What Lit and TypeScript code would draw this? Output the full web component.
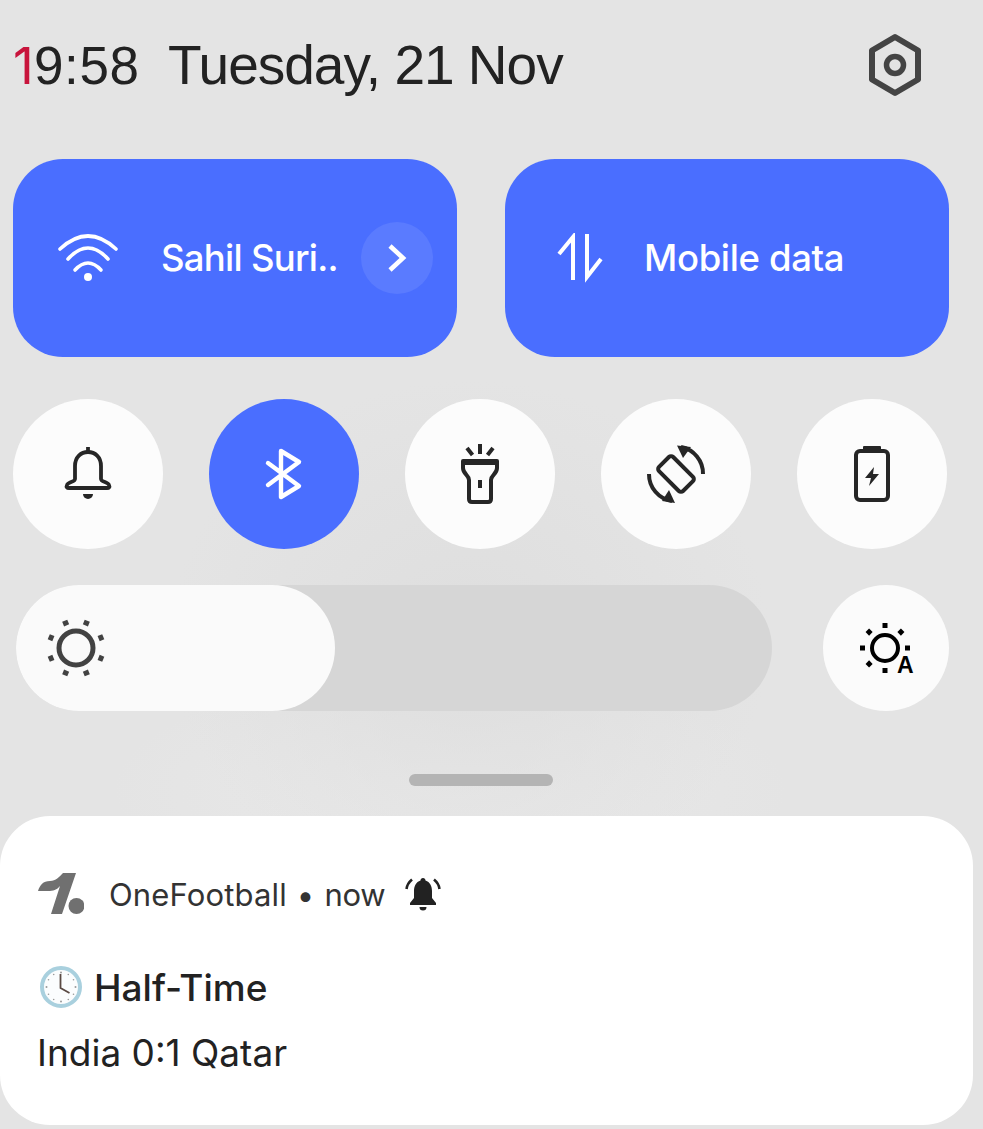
import { LitElement, html, css, svg } from "lit";
import { customElement } from "lit/decorators.js";

const rays = (cx: number, cy: number, r1: number, r2: number, start: number, w: number, skip = -1) =>
  [0, 1, 2, 3, 4, 5, 6, 7]
    .filter((i) => i !== skip)
    .map((i) => {
      const a = ((start + i * 45) * Math.PI) / 180;
      return svg`<line x1=${cx + r1 * Math.sin(a)} y1=${cy - r1 * Math.cos(a)} x2=${cx + r2 * Math.sin(a)} y2=${cy - r2 * Math.cos(a)} stroke-width=${w}></line>`;
    });

@customElement("app-root")
export class AppRoot extends LitElement {
  static styles = css`
    :host {
      display: block;
      width: 983px;
      height: 1129px;
      overflow: hidden;
      background:
        radial-gradient(ellipse 300px 260px at 470px 640px, #dedede 0%, rgba(222, 222, 222, 0) 100%),
        radial-gradient(ellipse 340px 120px at 450px 790px, #e9e9e9 0%, rgba(233, 233, 233, 0) 100%),
        #e4e4e4;
      font-family: Inter, "Liberation Sans", sans-serif;
      color: #222;
    }
    svg { display: block; flex: none; }
    .header {
      height: 130px;
      margin-bottom: 29px;
      padding: 0 59px 0 13px;
      display: flex;
      align-items: center;
      box-sizing: border-box;
      font-family: "Liberation Sans", Arial, sans-serif;
    }
    .time { font-size: 53px; letter-spacing: 0.6px; width: 155px; flex: none; display: flex; align-items: baseline; }
    .time b { font: 400 51px Inter, sans-serif; letter-spacing: 0; color: #c8143c; width: 21px; flex: none; overflow: hidden; }
    .date { font-size: 55px; letter-spacing: -1px; flex: 1; }
    .tiles {
      display: grid;
      grid-template-columns: 444px 444px;
      column-gap: 48px;
      padding-left: 13px;
    }
    .tile {
      height: 198px;
      border-radius: 50px;
      background: #4a6eff;
      color: #fff;
      display: flex;
      align-items: center;
      font-size: 36.5px;
      font-weight: 500;
    }
    .tile.wifi { padding-left: 45px; }
    .tile.wifi .label { margin-left: 43px; letter-spacing: -0.75px; }
    .tile.data { padding-left: 52px; }
    .tile.data .label { margin-left: 41px; letter-spacing: -0.36px; }
    .chev {
      margin-left: auto;
      margin-right: 24px;
      width: 72px;
      height: 72px;
      border-radius: 50%;
      background: #5a7bff;
      display: flex;
      align-items: center;
      justify-content: center;
    }
    .circles {
      display: flex;
      gap: 46px;
      padding-left: 13px;
      margin-top: 42px;
    }
    .circle {
      width: 150px;
      height: 150px;
      border-radius: 50%;
      background: #fcfcfc;
      display: flex;
      align-items: center;
      justify-content: center;
    }
    .circle.on { background: #4a6eff; }
    .bright {
      display: flex;
      align-items: center;
      gap: 51px;
      padding-left: 16px;
      margin-top: 36px;
    }
    .track {
      width: 756px;
      height: 126px;
      border-radius: 63px;
      background: #d6d6d6;
    }
    .fill {
      width: 319px;
      height: 126px;
      border-radius: 63px;
      background: #fafafa;
      display: flex;
      align-items: center;
      padding-left: 30px;
      box-sizing: border-box;
    }
    .auto {
      width: 126px;
      height: 126px;
      border-radius: 50%;
      background: #fbfbfb;
      position: relative;
      display: flex;
      align-items: center;
      justify-content: center;
    }
    .auto svg { margin: -1px 2px 0 0; }
    .auto span {
      position: absolute;
      left: 74px;
      top: 69px;
      font: 700 23px/1 "Liberation Sans", Arial, sans-serif;
      color: #000;
    }
    .handle {
      width: 144px;
      height: 12px;
      border-radius: 6px;
      background: #b4b4b4;
      margin: 63px 0 30px 409px;
    }
    .card {
      width: 973px;
      height: 309px;
      box-sizing: border-box;
      border-radius: 50px;
      background: #fff;
      padding: 55px 0 0 38px;
    }
    .app {
      display: flex;
      align-items: center;
      height: 46px;
      font-size: 31px;
      letter-spacing: 0.15px;
      color: #333;
    }
    .app .name { margin-left: 25px; }
    .app .dot { margin: 0 10px 0 10px; }
    .app .when { letter-spacing: -0.3px; }
    .app svg.ring { margin-left: 20px; }
    .title {
      display: flex;
      align-items: center;
      margin-top: 46px;
      height: 48px;
      font-size: 37px;
      font-weight: 500;
      color: #222;
    }
    .title span { margin-left: 11px; }
    .body {
      margin: 18px 0 0 -1px;
      font-size: 37px;
      line-height: 48px;
      color: #222;
    }
  `;

  render() {
    return html`
      <div class="header">
        <div class="time"><b>1</b><span>9:58</span></div>
        <div class="date">Tuesday, 21 Nov</div>
        <svg width="58" height="64" viewBox="0 0 58 64" fill="none" stroke="#444">
          <path d="M29 4 L52 17.5 V46.5 L29 60 L6 46.5 V17.5 Z" stroke-width="6" stroke-linejoin="round"></path>
          <circle cx="29" cy="32" r="8.5" stroke-width="5.5"></circle>
        </svg>
      </div>

      <div class="tiles">
        <div class="tile wifi">
          <svg width="60" height="50" viewBox="0 0 60 50" fill="none" stroke="#fff" stroke-width="3.6" stroke-linecap="round">
            <path d="M2 16 Q30 -10 58 16"></path>
            <path d="M10 26 Q30 4 50 26"></path>
            <path d="M17 37 Q30 23 43 37"></path>
            <circle cx="30" cy="44" r="4" fill="#fff" stroke="none"></circle>
          </svg>
          <div class="label">Sahil Suri..</div>
          <div class="chev">
            <svg width="22" height="30" viewBox="0 0 22 30" fill="none" stroke="#fff" stroke-width="4.6">
              <path d="M4 3 L17 15 L4 27"></path>
            </svg>
          </div>
        </div>
        <div class="tile data">
          <svg width="46" height="50" viewBox="0 0 46 50" fill="none" stroke="#fff" stroke-width="4">
            <path d="M2 21 L16 4 V47"></path>
            <path d="M30 1 V44 L44 26"></path>
          </svg>
          <div class="label">Mobile data</div>
        </div>
      </div>

      <div class="circles">
        <div class="circle">
          <svg width="50" height="56" viewBox="0 0 50 56" fill="none" stroke="#262626" stroke-width="3.8" stroke-linejoin="round">
            <path d="M12 33 V20 C12 11 18 6 25 6 C32 6 38 11 38 20 V33 C38 36 45 36 46 39 C47 41 46 42 44 42 H6 C4 42 3 41 4 39 C5 36 12 36 12 33 Z"></path>
            <path d="M25 1 V6"></path>
            <path d="M20 48 H30 A5 5 0 0 1 20 48 Z" fill="#262626" stroke="none"></path>
          </svg>
        </div>
        <div class="circle on">
          <svg width="40" height="56" viewBox="0 0 40 56" fill="none" stroke="#fff" stroke-width="4.4" stroke-linejoin="round" stroke-linecap="round">
            <path d="M4 17 L35 40 L17 51 V5 L35 16 L4 39"></path>
          </svg>
        </div>
        <div class="circle">
          <svg width="44" height="64" viewBox="0 0 44 64" fill="none" stroke="#262626" stroke-width="4">
            <path d="M5 19 H39 V26 C39 32 33 33 33 38 V57 Q33 60 30 60 H14 Q11 60 11 57 V38 C11 33 5 32 5 26 Z" stroke-linejoin="round"></path>
            <path d="M5 21 H39" stroke-width="4"></path>
            <path d="M22 2 V12 M9 6 L14.500 13 M35 6 L29.500 13" stroke-width="4"></path>
            <rect x="20" y="38" width="4" height="8" fill="#262626" stroke="none"></rect>
          </svg>
        </div>
        <div class="circle">
          <svg width="64" height="64" viewBox="0 0 64 64" fill="none" stroke="#262626" stroke-width="4">
            <rect x="15" y="22" width="34" height="20" rx="3" transform="rotate(45 32 32)"></rect>
            <path d="M37 5 A27 27 0 0 1 59 32"></path>
            <path d="M5 32 A27 27 0 0 0 28 59"></path>
            <path d="M33 3.500 L47 5 L39 16 Z" fill="#262626" stroke="none"></path>
            <path d="M31 61 L18 59 L25 48 Z" fill="#262626" stroke="none"></path>
          </svg>
        </div>
        <div class="circle">
          <svg width="38" height="58" viewBox="0 0 38 58" fill="none" stroke="#262626" stroke-width="4">
            <rect x="3" y="6" width="32" height="49" rx="4" stroke-linejoin="round"></rect>
            <path d="M10 1.500 Q10 1 11 1 H27 Q28 1 28 2 V6 H10 Z" fill="#262626" stroke="none"></path>
            <path d="M21 22 L12 33 H18 L16 41 L26 29 H20 Z" fill="#262626" stroke="none"></path>
          </svg>
        </div>
      </div>

      <div class="bright">
        <div class="track">
          <div class="fill">
            <svg width="60" height="60" viewBox="0 0 60 60" fill="none" stroke="#424242">
              <circle cx="30" cy="30" r="17" stroke-width="5"></circle>
              ${rays(30, 30, 24.5, 29.5, 22.5, 5.5)}
            </svg>
          </div>
        </div>
        <div class="auto">
          <svg width="52" height="52" viewBox="0 0 52 52" fill="none" stroke="#000">
            <circle cx="26" cy="26" r="13" stroke-width="4"></circle>
            ${rays(26, 26, 20, 25, 0, 5, 3)}
          </svg>
          <span>A</span>
        </div>
      </div>

      <div class="handle"></div>

      <div class="card">
        <div class="app">
          <svg width="46" height="42" viewBox="0 0 46 42" fill="#707070">
            <path d="M25 0 H38 L24 41 H13 L22 13 C19 17 15 18 10 18 H0 C2 12 5 8 12 8 C18 8 21 4 25 0 Z"></path>
            <circle cx="38.500" cy="33" r="8"></circle>
          </svg>
          <span class="name">OneFootball</span>
          <span class="dot">•</span>
          <span class="when">now</span>
          <svg class="ring" width="36" height="36" viewBox="0 0 36 36" fill="#222">
            <path d="M18 2 C19.500 2 20.500 3 20.500 4.500 C25 6 27 10 27 15 V22 L31 27 V29 H5 V27 L9 22 V15 C9 10 11 6 15.500 4.500 C15.500 3 16.500 2 18 2 Z"></path>
            <path d="M14.500 31 H21.500 A3.500 3.500 0 0 1 14.500 31 Z"></path>
            <path d="M1.500 13 C2 9 4 6 7 3.500 M34.500 13 C34 9 32 6 29 3.500" fill="none" stroke="#222" stroke-width="2.600"></path>
          </svg>
        </div>
        <div class="title">
          <svg width="44" height="44" viewBox="0 0 44 44" style="margin-left:1px">
            <circle cx="22" cy="22" r="19" fill="#fbfdfe" stroke="#a9d0de" stroke-width="4"></circle>
            <g fill="#9a9a9a">
              <circle cx="22" cy="7.500" r="1"></circle><circle cx="22" cy="36.500" r="1"></circle>
              <circle cx="7.500" cy="22" r="1"></circle><circle cx="36.500" cy="22" r="1"></circle>
              <circle cx="14.700" cy="9.500" r=".8"></circle><circle cx="29.300" cy="9.500" r=".8"></circle>
              <circle cx="14.700" cy="34.500" r=".8"></circle><circle cx="29.300" cy="34.500" r=".8"></circle>
              <circle cx="9.500" cy="14.700" r=".8"></circle><circle cx="34.500" cy="14.700" r=".8"></circle>
              <circle cx="9.500" cy="29.300" r=".8"></circle><circle cx="34.500" cy="29.300" r=".8"></circle>
            </g>
            <path d="M21.500 9 V23 L30.500 28" fill="none" stroke="#5a4a44" stroke-width="1.800"></path>
          </svg>
          <span>Half-Time</span>
        </div>
        <div class="body">India 0:1 Qatar</div>
      </div>
    `;
  }
}
